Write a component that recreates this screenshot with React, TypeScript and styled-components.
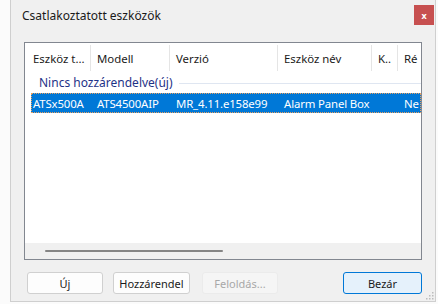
import React from "react";
import styled, { createGlobalStyle } from "styled-components";

const Global = createGlobalStyle`
  html, body { margin: 0; padding: 0; background: #fbfbfb; }
  body { font-family: "Segoe UI", "Noto Sans", "Liberation Sans", sans-serif; font-size: 12px; }
`;

const Page = styled.div`
  width: 438px;
  height: 304px;
  display: flex;
  padding-left: 10px;
  box-sizing: border-box;
`;

const Dialog = styled.div`
  position: relative;
  width: 426px;
  height: 302px;
  box-sizing: border-box;
  background: #f0f0f0;
  border: 1px solid #cfcfcf;
  border-top: none;
  display: flex;
  flex-direction: column;
`;

const TitleBar = styled.div`
  height: 30px;
  display: flex;
  align-items: center;
  justify-content: space-between;
  padding-left: 11px;
  padding-right: 1px;
`;

const Title = styled.div`
  color: #1a1a1a;
  font-size: 12px;
`;

const CloseBtn = styled.div`
  width: 20px;
  height: 20px;
  background: #c75050;
  color: #fff;
  font-size: 9px;
  font-weight: bold;
  display: flex;
  align-items: center;
  justify-content: center;
  line-height: 1;
`;

const Body = styled.div`
  padding: 12px 13px 0 13px;
  display: flex;
  flex-direction: column;
  gap: 12px;
`;

const ListBox = styled.div`
  width: 398px;
  height: 218px;
  box-sizing: border-box;
  border: 1px solid #828790;
  background: #fff;
  display: flex;
  flex-direction: column;
  overflow: hidden;
`;

const HeaderRow = styled.div`
  display: flex;
  height: 28px;
  padding-left: 2px;
  flex: none;
`;

const HeaderCell = styled.div<{ $w: number }>`
  width: ${(p) => p.$w}px;
  flex: none;
  box-sizing: border-box;
  padding-left: 6px;
  display: flex;
  align-items: center;
  color: #1a1a1a;
  font-size: 11.4px;
  white-space: nowrap;
  overflow: hidden;
  border-right: 1px solid #e5e5e5;
  margin: 2px 0 0 0;
`;

const GroupHeader = styled.div`
  height: 22px;
  display: flex;
  align-items: center;
  padding-left: 14px;
  gap: 6px;
  flex: none;
`;

const GroupTitle = styled.span`
  color: #1e3287;
  font-size: 12px;
  white-space: nowrap;
`;

const GroupLine = styled.div`
  flex: 1;
  height: 1px;
  background: #dfe6f1;
  margin-top: 2px;
`;

const Row = styled.div<{ $selected?: boolean }>`
  display: flex;
  height: 20px;
  margin-left: 6px;
  box-sizing: border-box;
  background: ${(p) => (p.$selected ? "#0078d7" : "transparent")};
  color: ${(p) => (p.$selected ? "#fff" : "#1a1a1a")};
  border: 1px dotted ${(p) => (p.$selected ? "#e8a060" : "transparent")};
  flex: none;
`;

const Cell = styled.div<{ $w: number; $pl: number }>`
  width: ${(p) => p.$w}px;
  flex: none;
  box-sizing: border-box;
  padding-left: ${(p) => p.$pl}px;
  display: flex;
  align-items: center;
  font-size: 11.4px;
  letter-spacing: -0.15px;
  white-space: nowrap;
  overflow: hidden;
`;

const Spacer = styled.div`
  flex: 1;
`;

const HScroll = styled.div`
  height: 16px;
  background: #f0f0f0;
  display: flex;
  align-items: center;
  padding-left: 20px;
  flex: none;
`;

const Thumb = styled.div`
  width: 178px;
  height: 2px;
  background: #858585;
  border-radius: 1px;
`;

const ButtonRow = styled.div`
  display: flex;
  align-items: center;
  padding-left: 3px;
  gap: 10px;
`;

const Button = styled.div<{ $w: number; $variant?: "default" | "disabled" | "primary" }>`
  width: ${(p) => p.$w}px;
  height: 22px;
  box-sizing: border-box;
  border-radius: 3px;
  display: flex;
  align-items: center;
  justify-content: center;
  font-size: 11px;
  background: ${(p) =>
    p.$variant === "primary" ? "#e5f1fb" : p.$variant === "disabled" ? "#f5f5f5" : "#fdfdfd"};
  border: 1px solid
    ${(p) => (p.$variant === "primary" ? "#0078d7" : p.$variant === "disabled" ? "#ebebeb" : "#d0d0d0")};
  color: ${(p) => (p.$variant === "disabled" ? "#a8a8a8" : "#1a1a1a")};
`;

const Grip = styled.svg`
  position: absolute;
  right: 1px;
  bottom: 1px;
`;

const cols = [64, 79, 108, 94, 26, 60];
const headers = ["Eszköz t...", "Modell", "Verzió", "Eszköz név", "K..", "Ré"];
const row = ["ATSx500A", "ATS4500AIP", "MR_4.11.e158e99", "Alarm Panel Box", "", "Ne"];

export default function App() {
  return (
    <>
      <Global />
      <Page>
        <Dialog>
          <TitleBar>
            <Title>Csatlakoztatott eszközök</Title>
            <CloseBtn>x</CloseBtn>
          </TitleBar>
          <Body>
            <ListBox>
              <HeaderRow>
                {headers.map((h, i) => (
                  <HeaderCell key={i} $w={cols[i]}>
                    {h}
                  </HeaderCell>
                ))}
              </HeaderRow>
              <GroupHeader>
                <GroupTitle>Nincs hozzárendelve(új)</GroupTitle>
                <GroupLine />
              </GroupHeader>
              <Row $selected>
                {row.map((c, i) => (
                  <Cell key={i} $w={i === 0 ? cols[0] - 5 : cols[i]} $pl={i === 0 ? 1 : 6}>
                    {c}
                  </Cell>
                ))}
              </Row>
              <Spacer />
              <HScroll>
                <Thumb />
              </HScroll>
            </ListBox>
            <ButtonRow>
              <Button $w={76}>Új</Button>
              <Button $w={77}>Hozzárendel</Button>
              <Button $w={76} $variant="disabled" style={{ marginLeft: 2 }}>
                Feloldás...
              </Button>
              <Spacer />
              <Button $w={79} $variant="primary">
                Bezár
              </Button>
            </ButtonRow>
          </Body>
          <Grip width="9" height="9" viewBox="0 0 9 9">
            {[
              [7, 1],
              [7, 4],
              [4, 4],
              [7, 7],
              [4, 7],
              [1, 7],
            ].map(([x, y], i) => (
              <rect key={i} x={x} y={y} width="1.5" height="1.5" fill="#bcbcbc" />
            ))}
          </Grip>
        </Dialog>
      </Page>
    </>
  );
}
